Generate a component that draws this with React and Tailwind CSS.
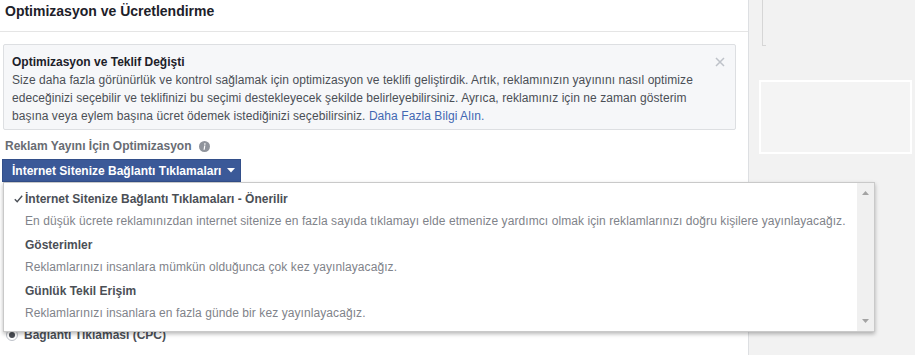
import React from "react";

function Check() {
  return (
    <svg width="9" height="8" viewBox="0 0 9 8" className="mr-[2px] shrink-0">
      <path d="M0.8 4.3 L3.2 6.8 L8.2 0.8" fill="none" stroke="#4b4f56" strokeWidth="1.4" />
    </svg>
  );
}

function Item({ title, desc, checked }) {
  return (
    <div className="pb-[2px]">
      <div className={`flex items-center h-[22px] ${checked ? "pl-[10px]" : "pl-[21px]"}`}>
        {checked && <Check />}
        <span className="text-[12px] font-bold text-[#4b4f56] whitespace-nowrap">{title}</span>
      </div>
      <div className="flex items-center h-[22px] pl-[21px] text-[12px] tracking-[0.08px] text-[#7f838a] whitespace-nowrap">{desc}</div>
    </div>
  );
}

export default function App() {
  return (
    <div className="relative flex w-[915px] h-[355px] overflow-hidden bg-white font-['Liberation_Sans',Arial,sans-serif]">
      <main className="w-[749px] shrink-0 border-r border-[#dddfe2] bg-white">
        <div className="h-[32px] border-b border-[#e5e5e5] pl-[5px] pt-[3px]">
          <h2 className="text-[14px] leading-[17px] font-bold text-[#1d2129]">Optimizasyon ve Ücretlendirme</h2>
        </div>

        <div className="relative mt-[12px] ml-[3px] w-[733px] h-[86px] border border-[#dddfe2] bg-[#f6f7f9] rounded-[2px] pl-[8px] pt-[8px]">
          <div className="text-[12px] leading-[18px] font-bold text-[#1d2129]">Optimizasyon ve Teklif Değişti</div>
          <div className="text-[12px] leading-[18px] tracking-[0.07px] text-[#4b4f56] whitespace-nowrap">
            <div>Size daha fazla görünürlük ve kontrol sağlamak için optimizasyon ve teklifi geliştirdik. Artık, reklamınızın yayınını nasıl optimize</div>
            <div>edeceğinizi seçebilir ve teklifinizi bu seçimi destekleyecek şekilde belirleyebilirsiniz. Ayrıca, reklamınız için ne zaman gösterim</div>
            <div>
              başına veya eylem başına ücret ödemek istediğinizi seçebilirsiniz. <span className="text-[#4267b2]">Daha Fazla Bilgi Alın.</span>
            </div>
          </div>
          <svg width="10" height="10" viewBox="0 0 10 10" className="absolute right-[10px] top-[12px]">
            <path d="M1 1 L9 9 M9 1 L1 9" stroke="#bec2c9" strokeWidth="1.5" />
          </svg>
        </div>

        <div className="mt-[8px] pl-[5px] flex items-center gap-[7px] h-[16px]">
          <span className="text-[12px] leading-[16px] font-bold text-[#686c73]">Reklam Yayını İçin Optimizasyon</span>
          <svg width="11" height="11" viewBox="0 0 11 11">
            <circle cx="5.5" cy="5.5" r="5.5" fill="#90949c" />
            <path d="M5.9 2.2 a0.75 0.75 0 1 0 0.01 0 Z" fill="#fff" />
            <path d="M5.2 4.4 L6.4 4.4 L5.7 8.8 L4.5 8.8 Z" fill="#fff" />
          </svg>
        </div>

        <div className="mt-[5px] ml-[2px] h-[23px] w-[239px] bg-[#3b5998] border border-[#334f8a] flex items-center pl-[9px] gap-[6px]">
          <span className="text-[12px] font-bold text-white whitespace-nowrap">İnternet Sitenize Bağlantı Tıklamaları</span>
          <svg width="8" height="5" viewBox="0 0 8 5">
            <path d="M0 0 L8 0 L4 4.5 Z" fill="#fff" />
          </svg>
        </div>

        <div className="mt-[145px] pl-[6px] flex items-center gap-[6px] h-[16px]">
          <span className="w-[12px] h-[12px] rounded-full border border-[#bec2c9] bg-white flex items-center justify-center">
            <span className="w-[6px] h-[6px] rounded-full bg-[#4b4f56]" />
          </span>
          <span className="text-[12px] font-bold text-[#4b4f56]">Bağlantı Tıklaması (CPC)</span>
        </div>
      </main>

      <aside className="flex-1 bg-[#f2f2f2]">
        <div className="ml-[13px] h-[46px] w-[4px] border-l border-b border-[#d6d6d6]" />
        <div className="mt-[34px] ml-[10px] w-[153px] h-[74px] border-2 border-white bg-[#f4f4f4]" />
      </aside>

      <div className="absolute left-[3px] top-[182px] w-[872px] h-[150px] bg-white border border-[#c9c9c9] shadow-[0_2px_4px_rgba(0,0,0,0.28)] flex">
        <div className="flex-1 pt-[5px]">
          <Item
            checked
            title="İnternet Sitenize Bağlantı Tıklamaları - Önerilir"
            desc="En düşük ücrete reklamınızdan internet sitenize en fazla sayıda tıklamayı elde etmenize yardımcı olmak için reklamlarınızı doğru kişilere yayınlayacağız."
          />
          <Item title="Gösterimler" desc="Reklamlarınızı insanlara mümkün olduğunca çok kez yayınlayacağız." />
          <Item title="Günlük Tekil Erişim" desc="Reklamlarınızı insanlara en fazla günde bir kez yayınlayacağız." />
        </div>
        <div className="w-[17px] bg-[#f0f0f0] flex flex-col items-center justify-between pt-[8px] pb-[8px]">
          <svg width="7" height="4" viewBox="0 0 7 4">
            <path d="M0 4 L7 4 L3.5 0 Z" fill="#a3a3a3" />
          </svg>
          <svg width="7" height="4" viewBox="0 0 7 4">
            <path d="M0 0 L7 0 L3.5 4 Z" fill="#a3a3a3" />
          </svg>
        </div>
      </div>
    </div>
  );
}
